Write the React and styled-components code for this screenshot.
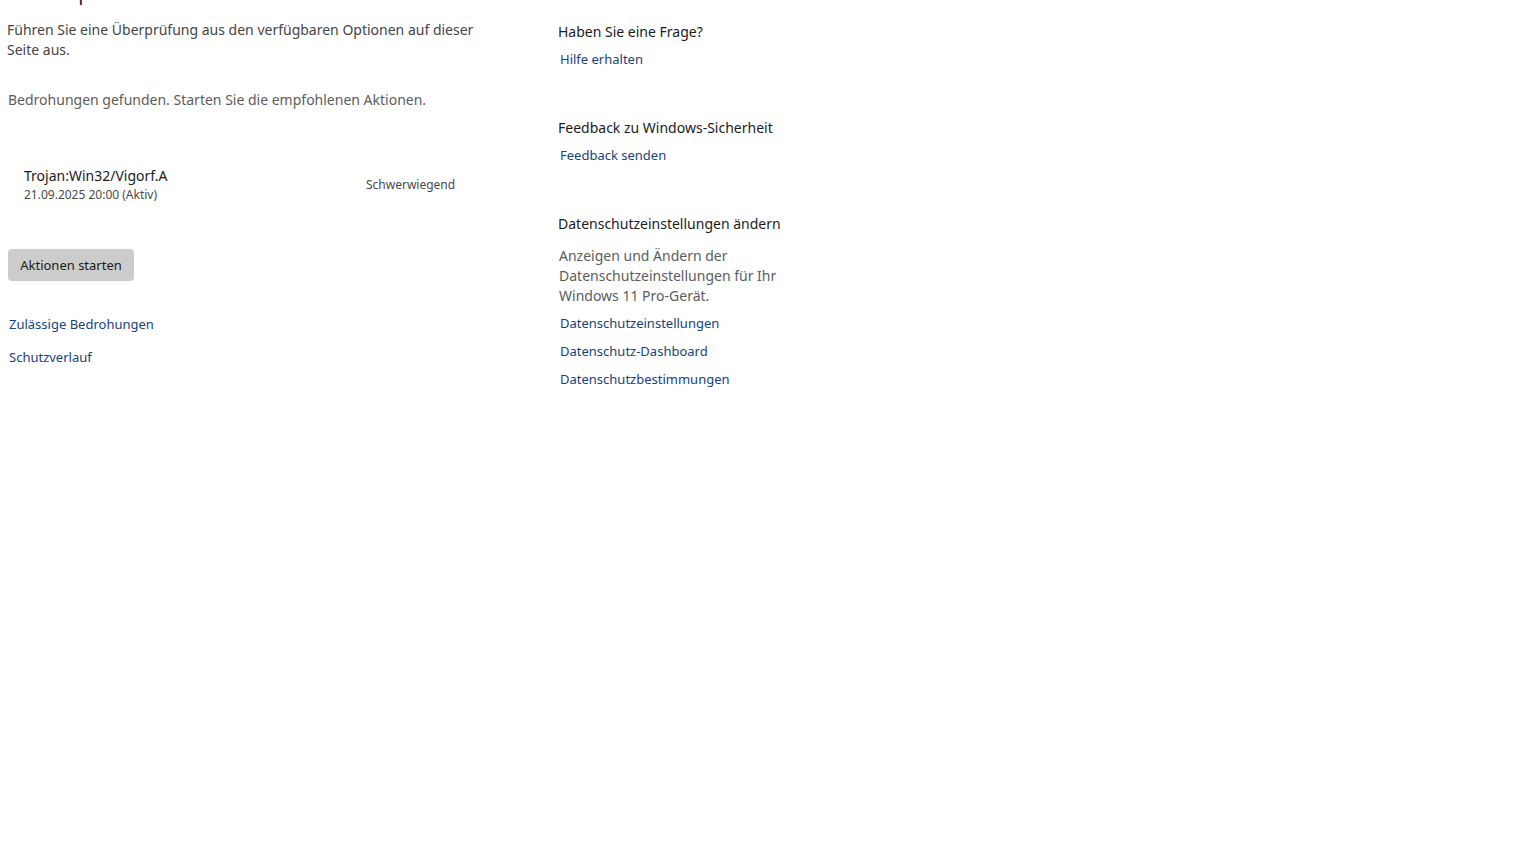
import React from "react";
import styled, { createGlobalStyle } from "styled-components";

const Global = createGlobalStyle`
  html, body { margin: 0; padding: 0; background: #ffffff; overflow: hidden; }
  body { font-family: "Segoe UI", "Noto Sans", "Open Sans", sans-serif; color: #1b1b1b; }
  * { box-sizing: border-box; }
`;

const Page = styled.div`
  display: grid;
  grid-template-columns: 551px 1fr;
  padding-left: 7px;
  width: 1536px;
  height: 864px;
  overflow: hidden;
`;

const LeftCol = styled.section`
  display: flex;
  flex-direction: column;
  align-items: flex-start;
`;

const RightCol = styled.aside`
  display: flex;
  flex-direction: column;
  align-items: flex-start;
  padding-top: 22px;
`;

const CutHeading = styled.h2`
  margin: -21px 0 0 5px;
  font-size: 20px;
  line-height: 28px;
  font-weight: 400;
  color: #1b1b1b;
`;

const Text = styled.p`
  margin: ${(p) => p.$mt || 0}px 0 0 ${(p) => p.$ml || 0}px;
  font-size: 14px;
  line-height: 20px;
  color: ${(p) => p.$color || "#444444"};
  width: ${(p) => (p.$w ? `${p.$w}px` : "auto")};
`;

const ThreatRow = styled.div`
  display: flex;
  align-items: center;
  margin-top: 56px;
  padding-left: 17px;
`;

const ThreatInfo = styled.div`
  display: flex;
  flex-direction: column;
  width: 342px;
`;

const ThreatName = styled.span`
  font-size: 14px;
  line-height: 20px;
  color: #1b1b1b;
`;

const ThreatDate = styled.span`
  margin-top: 1px;
  font-size: 12px;
  line-height: 16px;
  color: #4a4a4a;
`;

const Severity = styled.span`
  font-size: 12px;
  line-height: 16px;
  color: #4a4a4a;
`;

const ActionButton = styled.button`
  margin: 46px 0 0 1px;
  height: 32px;
  width: 126px;
  border: none;
  border-radius: 4px;
  background: #cccccc;
  color: #1b1b1b;
  font-family: inherit;
  font-size: 13px;
  padding: 0;
`;

const Link = styled.a`
  display: block;
  margin: ${(p) => p.$mt || 0}px 0 0 ${(p) => p.$ml || 0}px;
  font-size: 13px;
  line-height: 20px;
  color: #17437a;
  text-decoration: none;
`;

const SideHeading = styled.h3`
  margin: ${(p) => p.$mt || 0}px 0 0 0;
  font-size: 14px;
  font-weight: 400;
  line-height: 20px;
  color: #1b1b1b;
`;

export default function App() {
  return (
    <>
      <Global />
      <Page>
        <LeftCol>
          <CutHeading>Scan-Optionen</CutHeading>
          <Text $mt={13} $w={490} $color="#444444">
            Führen Sie eine Überprüfung aus den verfügbaren Optionen auf dieser Seite aus.
          </Text>
          <Text $mt={30} $ml={1} $color="#5c5c5c">
            Bedrohungen gefunden. Starten Sie die empfohlenen Aktionen.
          </Text>
          <ThreatRow>
            <ThreatInfo>
              <ThreatName>Trojan:Win32/Vigorf.A</ThreatName>
              <ThreatDate>21.09.2025 20:00 (Aktiv)</ThreatDate>
            </ThreatInfo>
            <Severity>Schwerwiegend</Severity>
          </ThreatRow>
          <ActionButton>Aktionen starten</ActionButton>
          <Link $mt={33} $ml={2}>Zulässige Bedrohungen</Link>
          <Link $mt={13} $ml={2}>Schutzverlauf</Link>
        </LeftCol>
        <RightCol>
          <SideHeading>Haben Sie eine Frage?</SideHeading>
          <Link $mt={7} $ml={2}>Hilfe erhalten</Link>
          <SideHeading $mt={49}>Feedback zu Windows-Sicherheit</SideHeading>
          <Link $mt={7} $ml={2}>Feedback senden</Link>
          <SideHeading $mt={49}>Datenschutzeinstellungen ändern</SideHeading>
          <Text $mt={12} $ml={1} $w={230} $color="#5c5c5c">
            Anzeigen und Ändern der Datenschutzeinstellungen für Ihr Windows 11 Pro-Gerät.
          </Text>
          <Link $mt={7} $ml={2}>Datenschutzeinstellungen</Link>
          <Link $mt={8} $ml={2}>Datenschutz-Dashboard</Link>
          <Link $mt={8} $ml={2}>Datenschutzbestimmungen</Link>
        </RightCol>
      </Page>
    </>
  );
}
